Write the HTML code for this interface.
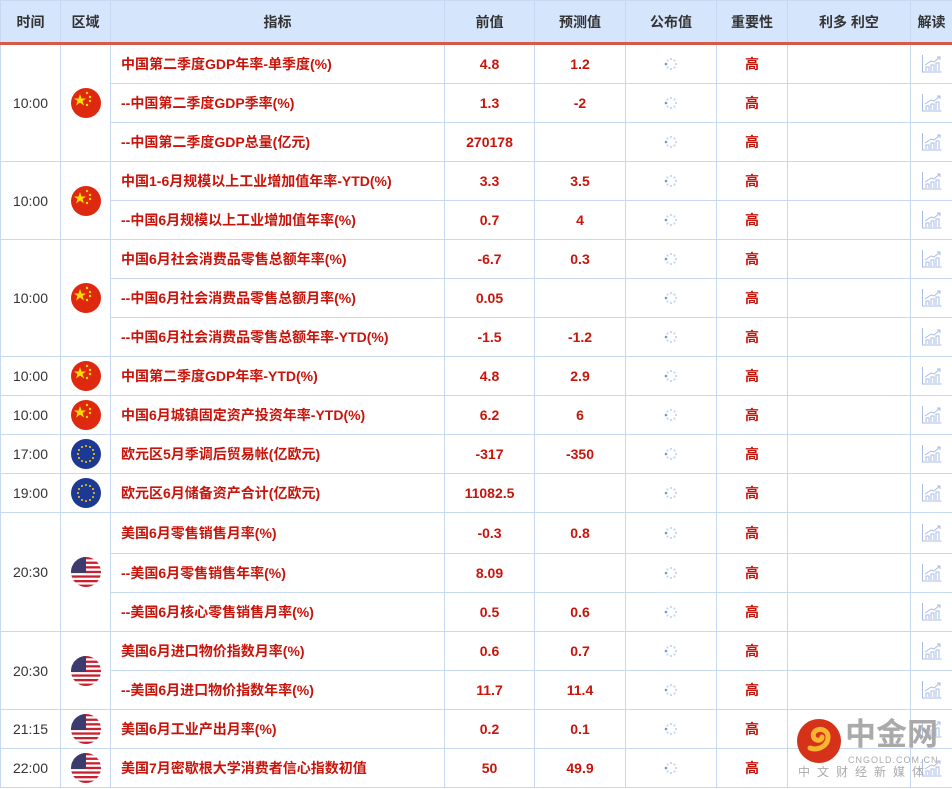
<!DOCTYPE html>
<html><head><meta charset="utf-8"><style>
body{margin:0;background:#fff;font-family:"Liberation Sans","Noto Sans CJK SC",sans-serif;}
table{border-collapse:collapse;table-layout:fixed;width:952px;}
td,th{border:1px solid #c6d8f2;padding:0;text-align:center;font-size:14px;}
th{height:41px;background:#d5e5fc;color:#333;font-weight:bold;border-bottom:3px solid #d55a4a;border-top:1px solid #c6d8f2;}
td{height:38px;}
td.t{color:#333;font-size:14px;}
td.n{text-align:left;padding-left:10px;color:#c8140a;font-weight:bold;}
td.v{color:#c8140a;font-weight:bold;}
td.h{color:#c8140a;font-weight:bold;}
svg{display:block;margin:auto;}
.wm{position:absolute;left:796px;top:718px;width:156px;height:70px;}
</style></head><body>
<svg width="0" height="0" style="position:absolute">
<defs>
<g id="cn"><circle cx="15" cy="15" r="15" fill="#de2910"/><polygon points="9,6 10.5,10.5 15,10.5 11.5,13 13,17.5 9,14.5 5,17.5 6.5,13 3,10.5 7.5,10.5" fill="#ffde00"/><circle cx="16" cy="5" r="1.2" fill="#ffde00"/><circle cx="19" cy="9" r="1.2" fill="#ffde00"/><circle cx="19" cy="13" r="1.2" fill="#ffde00"/><circle cx="16" cy="17" r="1.2" fill="#ffde00"/></g>
<g id="eu"><circle cx="15" cy="15" r="15" fill="#1c3a94"/><g fill="#ffcc00"><circle cx="15" cy="7" r="1"/><circle cx="19" cy="8" r="1"/><circle cx="22" cy="11" r="1"/><circle cx="23" cy="15" r="1"/><circle cx="22" cy="19" r="1"/><circle cx="19" cy="22" r="1"/><circle cx="15" cy="23" r="1"/><circle cx="11" cy="22" r="1"/><circle cx="8" cy="19" r="1"/><circle cx="7" cy="15" r="1"/><circle cx="8" cy="11" r="1"/><circle cx="11" cy="8" r="1"/></g></g>
<clipPath id="cc"><circle cx="15" cy="15" r="15"/></clipPath>
<g id="us"><g clip-path="url(#cc)"><rect width="30" height="30" fill="#fff"/><g fill="#c8202e"><rect y="0" width="30" height="2.3"/><rect y="4.6" width="30" height="2.3"/><rect y="9.2" width="30" height="2.3"/><rect y="13.8" width="30" height="2.3"/><rect y="18.4" width="30" height="2.3"/><rect y="23" width="30" height="2.3"/><rect y="27.6" width="30" height="2.4"/></g><rect width="15" height="16" fill="#3c3b6e"/></g></g>
<g id="sp" fill="#c3d6f2"><circle cx="7" cy="2" r="1.1"/><circle cx="10.5" cy="3.5" r="1.1"/><circle cx="12" cy="7" r="1.1"/><circle cx="10.5" cy="10.5" r="1.1"/><circle cx="7" cy="12" r="1.1"/><circle cx="3.5" cy="10.5" r="1.1"/><circle cx="2" cy="7" r="1.3" fill="#6f98da"/><circle cx="3.5" cy="3.5" r="1.1"/></g>
<g id="ch" fill="none" stroke="#a8bce4" stroke-width="1"><path d="M1.5 1v17h19"/><path d="M5 17v-4h3v4M10 17v-6h3v6M15 17v-8h3v8"/><path d="M4 11l6-4 3 1 6-5"/><path d="M16 3h3v3"/></g>
</defs></svg>
<table>
<colgroup><col style="width:60px"><col style="width:50px"><col style="width:334px"><col style="width:90px"><col style="width:91px"><col style="width:91px"><col style="width:71px"><col style="width:123px"><col style="width:42px"></colgroup>
<tr><th>时间</th><th>区域</th><th>指标</th><th>前值</th><th>预测值</th><th>公布值</th><th>重要性</th><th>利多 利空</th><th>解读</th></tr>
<tr><td class="t" rowspan="3">10:00</td><td rowspan="3"><svg width="30" height="30"><use href="#cn"/></svg></td><td class="n">中国第二季度GDP年率-单季度(%)</td><td class="v">4.8</td><td class="v">1.2</td><td><svg width="14" height="14"><use href="#sp"/></svg></td><td class="h">高</td><td></td><td><svg width="22" height="20"><use href="#ch"/></svg></td></tr>
<tr><td class="n">--中国第二季度GDP季率(%)</td><td class="v">1.3</td><td class="v">-2</td><td><svg width="14" height="14"><use href="#sp"/></svg></td><td class="h">高</td><td></td><td><svg width="22" height="20"><use href="#ch"/></svg></td></tr>
<tr><td class="n">--中国第二季度GDP总量(亿元)</td><td class="v">270178</td><td class="v"></td><td><svg width="14" height="14"><use href="#sp"/></svg></td><td class="h">高</td><td></td><td><svg width="22" height="20"><use href="#ch"/></svg></td></tr>
<tr><td class="t" rowspan="2">10:00</td><td rowspan="2"><svg width="30" height="30"><use href="#cn"/></svg></td><td class="n">中国1-6月规模以上工业增加值年率-YTD(%)</td><td class="v">3.3</td><td class="v">3.5</td><td><svg width="14" height="14"><use href="#sp"/></svg></td><td class="h">高</td><td></td><td><svg width="22" height="20"><use href="#ch"/></svg></td></tr>
<tr><td class="n">--中国6月规模以上工业增加值年率(%)</td><td class="v">0.7</td><td class="v">4</td><td><svg width="14" height="14"><use href="#sp"/></svg></td><td class="h">高</td><td></td><td><svg width="22" height="20"><use href="#ch"/></svg></td></tr>
<tr><td class="t" rowspan="3">10:00</td><td rowspan="3"><svg width="30" height="30"><use href="#cn"/></svg></td><td class="n">中国6月社会消费品零售总额年率(%)</td><td class="v">-6.7</td><td class="v">0.3</td><td><svg width="14" height="14"><use href="#sp"/></svg></td><td class="h">高</td><td></td><td><svg width="22" height="20"><use href="#ch"/></svg></td></tr>
<tr><td class="n">--中国6月社会消费品零售总额月率(%)</td><td class="v">0.05</td><td class="v"></td><td><svg width="14" height="14"><use href="#sp"/></svg></td><td class="h">高</td><td></td><td><svg width="22" height="20"><use href="#ch"/></svg></td></tr>
<tr><td class="n">--中国6月社会消费品零售总额年率-YTD(%)</td><td class="v">-1.5</td><td class="v">-1.2</td><td><svg width="14" height="14"><use href="#sp"/></svg></td><td class="h">高</td><td></td><td><svg width="22" height="20"><use href="#ch"/></svg></td></tr>
<tr><td class="t">10:00</td><td><svg width="30" height="30"><use href="#cn"/></svg></td><td class="n">中国第二季度GDP年率-YTD(%)</td><td class="v">4.8</td><td class="v">2.9</td><td><svg width="14" height="14"><use href="#sp"/></svg></td><td class="h">高</td><td></td><td><svg width="22" height="20"><use href="#ch"/></svg></td></tr>
<tr><td class="t">10:00</td><td><svg width="30" height="30"><use href="#cn"/></svg></td><td class="n">中国6月城镇固定资产投资年率-YTD(%)</td><td class="v">6.2</td><td class="v">6</td><td><svg width="14" height="14"><use href="#sp"/></svg></td><td class="h">高</td><td></td><td><svg width="22" height="20"><use href="#ch"/></svg></td></tr>
<tr><td class="t">17:00</td><td><svg width="30" height="30"><use href="#eu"/></svg></td><td class="n">欧元区5月季调后贸易帐(亿欧元)</td><td class="v">-317</td><td class="v">-350</td><td><svg width="14" height="14"><use href="#sp"/></svg></td><td class="h">高</td><td></td><td><svg width="22" height="20"><use href="#ch"/></svg></td></tr>
<tr><td class="t">19:00</td><td><svg width="30" height="30"><use href="#eu"/></svg></td><td class="n">欧元区6月储备资产合计(亿欧元)</td><td class="v">11082.5</td><td class="v"></td><td><svg width="14" height="14"><use href="#sp"/></svg></td><td class="h">高</td><td></td><td><svg width="22" height="20"><use href="#ch"/></svg></td></tr>
<tr><td class="t" rowspan="3">20:30</td><td rowspan="3"><svg width="30" height="30"><use href="#us"/></svg></td><td class="n" style="height:40px">美国6月零售销售月率(%)</td><td class="v">-0.3</td><td class="v">0.8</td><td><svg width="14" height="14"><use href="#sp"/></svg></td><td class="h">高</td><td></td><td><svg width="22" height="20"><use href="#ch"/></svg></td></tr>
<tr><td class="n">--美国6月零售销售年率(%)</td><td class="v">8.09</td><td class="v"></td><td><svg width="14" height="14"><use href="#sp"/></svg></td><td class="h">高</td><td></td><td><svg width="22" height="20"><use href="#ch"/></svg></td></tr>
<tr><td class="n">--美国6月核心零售销售月率(%)</td><td class="v">0.5</td><td class="v">0.6</td><td><svg width="14" height="14"><use href="#sp"/></svg></td><td class="h">高</td><td></td><td><svg width="22" height="20"><use href="#ch"/></svg></td></tr>
<tr><td class="t" rowspan="2">20:30</td><td rowspan="2"><svg width="30" height="30"><use href="#us"/></svg></td><td class="n">美国6月进口物价指数月率(%)</td><td class="v">0.6</td><td class="v">0.7</td><td><svg width="14" height="14"><use href="#sp"/></svg></td><td class="h">高</td><td></td><td><svg width="22" height="20"><use href="#ch"/></svg></td></tr>
<tr><td class="n">--美国6月进口物价指数年率(%)</td><td class="v">11.7</td><td class="v">11.4</td><td><svg width="14" height="14"><use href="#sp"/></svg></td><td class="h">高</td><td></td><td><svg width="22" height="20"><use href="#ch"/></svg></td></tr>
<tr><td class="t">21:15</td><td><svg width="30" height="30"><use href="#us"/></svg></td><td class="n">美国6月工业产出月率(%)</td><td class="v">0.2</td><td class="v">0.1</td><td><svg width="14" height="14"><use href="#sp"/></svg></td><td class="h">高</td><td></td><td><svg width="22" height="20"><use href="#ch"/></svg></td></tr>
<tr><td class="t">22:00</td><td><svg width="30" height="30"><use href="#us"/></svg></td><td class="n">美国7月密歇根大学消费者信心指数初值</td><td class="v">50</td><td class="v">49.9</td><td><svg width="14" height="14"><use href="#sp"/></svg></td><td class="h">高</td><td></td><td><svg width="22" height="20"><use href="#ch"/></svg></td></tr>
</table>
<div class="wm">
<svg width="46" height="46" style="position:absolute;left:0;top:0;margin:0"><circle cx="23" cy="23" r="22" fill="#d6321a"/><path d="M14 30c8 3 18-2 18-11 0-6-6-9-11-7-5 2-5 9 0 10 3 1 5-1 5-3" fill="none" stroke="#f6b730" stroke-width="5" stroke-linecap="round"/></svg>
<div style="position:absolute;left:49px;top:-1px;font-size:31px;line-height:36px;font-weight:bold;color:#aaa;white-space:nowrap;">中金网</div>
<div style="position:absolute;left:52px;top:37px;font-size:9px;line-height:10px;color:#aaa;white-space:nowrap;letter-spacing:1px">CNGOLD.COM.CN</div>
<div style="position:absolute;left:2px;top:47px;font-size:12px;line-height:14px;color:#aaa;white-space:nowrap;letter-spacing:7px">中文财经新媒体</div>
</div>
</body></html>
